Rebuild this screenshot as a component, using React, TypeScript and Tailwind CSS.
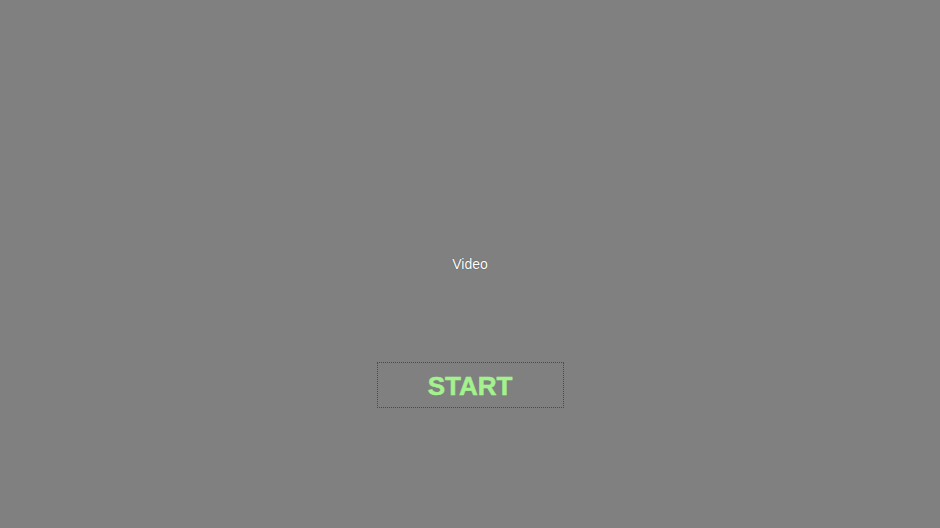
const App = () => {
  return (
    <div className="h-[528px] w-[940px] bg-[#808080] flex flex-col items-center font-['Liberation_Sans',Arial,sans-serif]">
      <div className="mt-[254px] h-5 text-sm leading-5 text-white [text-shadow:0_0_1px_rgba(0,0,0,0.6)]">
        Video
      </div>
      <button className="mt-[88px] w-[187px] h-[46px] border border-dotted border-[#4a4a4a] flex items-center justify-center bg-transparent pt-[2px]">
        <span className="text-[26px] font-bold leading-none text-[#a4f28e] [-webkit-text-stroke:0.5px_#a4f28e]">START</span>
      </button>
    </div>
  );
};

export default App;
